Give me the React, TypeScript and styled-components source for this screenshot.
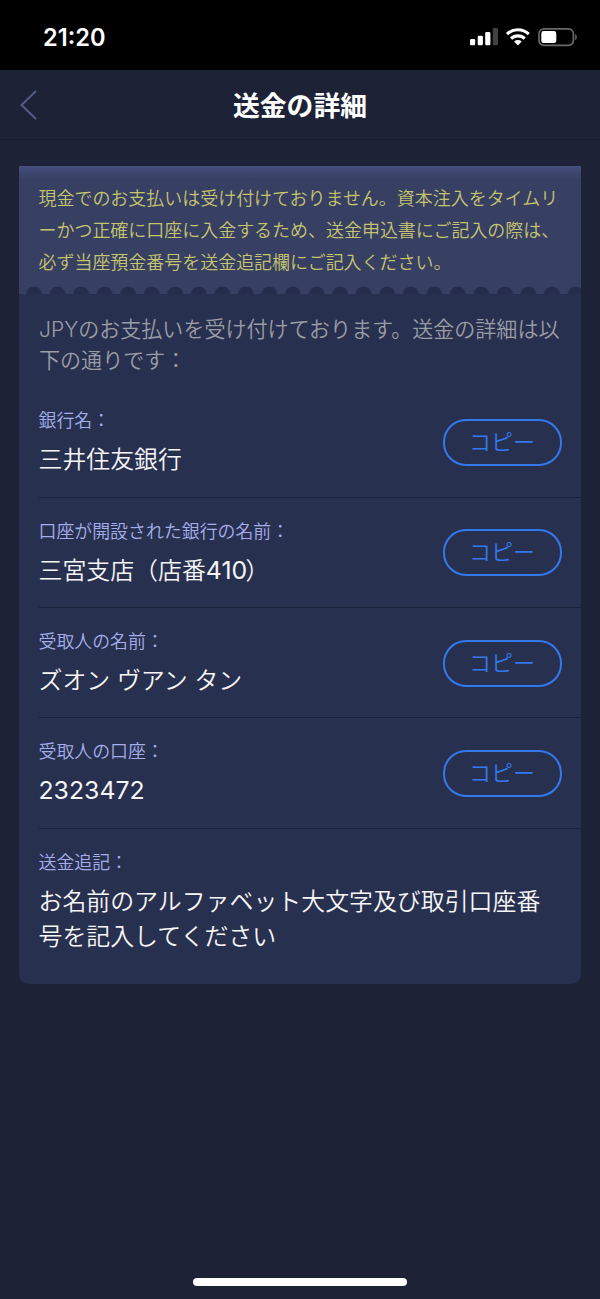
import React from "react";
import styled, { createGlobalStyle } from "styled-components";

const GlobalStyle = createGlobalStyle`
  * { box-sizing: border-box; }
  html, body { margin: 0; background: #1d2236; }
  body { font-family: Inter, "Noto Sans CJK JP", sans-serif; font-weight: 350; }
`;

const Screen = styled.div`
  width: 600px;
  height: 1299px;
  display: flex;
  flex-direction: column;
  background: #1d2236;
  overflow: hidden;
`;

const StatusBar = styled.div`
  height: 70px;
  flex: none;
  display: flex;
  align-items: flex-start;
  justify-content: space-between;
  padding: 0 20px 0 43px;
  background: #000;
`;

const Clock = styled.div`
  margin-top: 23px;
  font-size: 23.6px;
  line-height: 30px;
  font-weight: 600;
  color: #fff;
`;

const StatusIcons = styled.svg`
  display: block;
  width: 110px;
  height: 20px;
  margin-top: 27px;
`;

const Header = styled.header`
  height: 70px;
  flex: none;
  display: grid;
  grid-template-columns: 60px 1fr 60px;
  align-items: center;
  padding-top: 2px;
  border-bottom: 1px solid #191d30;
`;

const BackIcon = styled.svg`
  display: block;
  width: 20px;
  height: 32px;
  margin: 0 0 2px 19px;
`;

const Title = styled.h1`
  margin: 0;
  text-align: center;
  font-size: 26.8px;
  line-height: 40px;
  font-weight: 700;
  color: #fff;
`;

const Card = styled.main`
  width: 562px;
  height: 818px;
  margin: 26px 0 0 19px;
  flex: none;
  background: #28304f;
  border-radius: 0 0 10px 10px;
  overflow: hidden;
`;

const Notice = styled.div`
  height: 128px;
  padding: 17px 0 0 19.5px;
  background:
    radial-gradient(circle at 50% 8.5px, #262d4c 7.3px, rgba(38, 45, 76, 0) 8.3px) 3.2px 100% / 23.55px 8.5px repeat-x,
    linear-gradient(#465080, #373f62 13px, #373f62);
`;

const NoticeText = styled.p`
  margin: 0;
  font-size: 17.98px;
  line-height: 32px;
  white-space: nowrap;
  color: #c5c570;
`;

const Intro = styled.p`
  margin: 0;
  padding: 21px 0 0 20px;
  height: 93.2px;
  font-size: 21.05px;
  line-height: 30.5px;
  white-space: nowrap;
  color: #9a9ca6;
`;

const Row = styled.section`
  height: 110.35px;
  margin-left: 19.5px;
  padding-right: 19px;
  display: flex;
  justify-content: space-between;
  border-bottom: 1px solid #1b213a;

  &:last-child {
    border-bottom: 0;
    height: 150px;
  }
`;

const Field = styled.div`
  padding-top: 21.2px;
`;

const Label = styled.div`
  font-size: 17.92px;
  line-height: 26px;
  color: #a5aeea;
`;

const Value = styled.div`
  margin-top: 8px;
  font-size: 23.92px;
  line-height: 35px;
  white-space: nowrap;
  color: #f6f6f6;
`;

const Digits = styled.span`
  font-size: 24.8px;
  font-weight: 400;
`;

const Tight = styled.span`
  margin-left: -1.5px;
`;

const CopyButton = styled.button`
  width: 119px;
  height: 47px;
  flex: none;
  margin-top: 31.8px;
  padding: 0 1px 1px 0;
  border: 2px solid #3478ed;
  border-radius: 23px;
  background: transparent;
  font-family: inherit;
  font-size: 22px;
  font-weight: 350;
  line-height: 40px;
  color: #3478ed;
`;

const HomeIndicator = styled.div`
  width: 214px;
  height: 8px;
  margin: auto auto 13px;
  border-radius: 4px;
  background: #fff;
`;

const rows: { label: string; value: React.ReactNode }[] = [
  { label: "銀行名：", value: "三井住友銀行" },
  {
    label: "口座が開設された銀行の名前：",
    value: (
      <>
        三宮支店（店番<Digits>410</Digits>
        <Tight>）</Tight>
      </>
    ),
  },
  { label: "受取人の名前：", value: "ズオン ヴアン タン" },
  { label: "受取人の口座：", value: <Digits>2323472</Digits> },
];

export default function App() {
  return (
    <Screen lang="ja">
      <GlobalStyle />
      <StatusBar>
        <Clock>21:20</Clock>
        <StatusIcons viewBox="0 0 110 20">
          <g fill="#fff">
            <rect x="0" y="12" width="5.2" height="6.3" rx="1.3" />
            <rect x="7.7" y="8.8" width="5.2" height="9.5" rx="1.3" />
            <rect x="15.2" y="5.1" width="5.2" height="13.2" rx="1.3" />
            <rect x="22.8" y="1.1" width="5.2" height="17.2" rx="1.3" fill="#414141" />
            <path d="M47.9 18.4 44.1 14.5a5.6 5.6 0 0 1 7.6 0Z" />
          </g>
          <g fill="none" stroke="#fff" strokeWidth="3.1">
            <path d="M37 7.1a15.8 15.8 0 0 1 21.8 0" />
            <path d="M41.1 11.6a9.8 9.8 0 0 1 13.6 0" />
          </g>
          <rect x="69" y="1.8" width="34.4" height="16.6" rx="5" fill="none" stroke="#6a6a6a" strokeWidth="1.7" />
          <rect x="71.3" y="4.1" width="15" height="12" rx="2.4" fill="#fff" />
          <path d="M105.2 7c2.2 1 2.2 5.2 0 6.2Z" fill="#6a6a6a" />
        </StatusIcons>
      </StatusBar>
      <Header>
        <BackIcon viewBox="0 0 20 32" fill="none" stroke="#535d85" strokeWidth="2">
          <path d="M17 2 2.5 16 17 30" />
        </BackIcon>
        <Title>送金の詳細</Title>
      </Header>
      <Card>
        <Notice>
          <NoticeText>
            現金でのお支払いは受け付けておりません。資本注入をタイムリ
            <br />
            ーかつ正確に口座に入金するため、送金申込書にご記入の際は、
            <br />
            必ず当座預金番号を送金追記欄にご記入ください。
          </NoticeText>
        </Notice>
        <Intro>
          JPYのお支払いを受け付けております。送金の詳細は以
          <br />
          下の通りです：
        </Intro>
        {rows.map((row) => (
          <Row key={row.label}>
            <Field>
              <Label>{row.label}</Label>
              <Value>{row.value}</Value>
            </Field>
            <CopyButton>コピー</CopyButton>
          </Row>
        ))}
        <Row>
          <Field>
            <Label>送金追記：</Label>
            <Value>
              お名前のアルファベット大文字及び取引口座番
              <br />
              号を記入してください
            </Value>
          </Field>
        </Row>
      </Card>
      <HomeIndicator />
    </Screen>
  );
}
